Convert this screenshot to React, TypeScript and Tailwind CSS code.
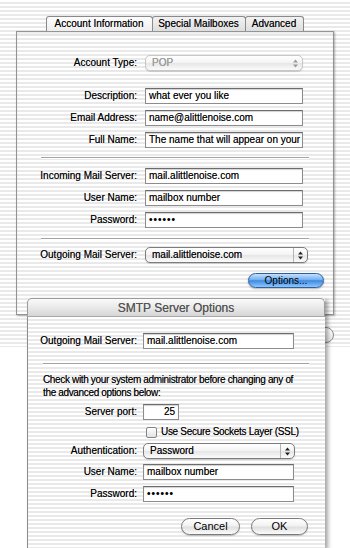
import type { ReactNode } from 'react';

// ── Shared bits ────────────────────────────────────────────────────────────

const STRIPES =
  'bg-[repeating-linear-gradient(to_bottom,#ffffff_0px,#ffffff_2px,#e9e9e9_2px,#e9e9e9_4px)]';

function TextField({ value, className = '' }: { value: string; className?: string }) {
  return (
    <div
      className={`h-[16px] shrink-0 overflow-hidden whitespace-nowrap border border-[#8c8c8c] border-t-[#6c6c6c] bg-white px-[3px] text-[10px] leading-[14px] shadow-[inset_0_1px_1px_rgba(0,0,0,0.18)] ${className}`}
    >
      {value}
    </div>
  );
}

function Arrows({ color }: { color: string }) {
  return (
    <svg width="5" height="9" viewBox="0 0 5 9">
      <path d="M2.5 0.5L5 3.5H0z M0 5.5h5L2.5 8.5z" fill={color} />
    </svg>
  );
}

function Popup({
  value,
  disabled = false,
  className = '',
}: {
  value: string;
  disabled?: boolean;
  className?: string;
}) {
  return (
    <div
      className={`flex h-[16px] shrink-0 items-stretch overflow-hidden rounded-[5px] border bg-[linear-gradient(to_bottom,#ffffff,#f3f3f3_50%,#e6e6e6_52%,#fbfbfb)] shadow-[0_1px_1px_rgba(0,0,0,0.15)] ${
        disabled ? 'border-[#c6c6c6] text-[#a3a3a3]' : 'border-[#7c7c7c] text-black'
      } ${className}`}
    >
      <span className="flex-1 pl-[6px] text-[10px] leading-[14px]">{value}</span>
      <span
        className={`flex w-[14px] items-center justify-center border-l ${
          disabled ? 'border-transparent' : 'border-[#b4b4b4]'
        }`}
      >
        <Arrows color={disabled ? '#9a9a9a' : '#222222'} />
      </span>
    </div>
  );
}

function Separator({ className = '' }: { className?: string }) {
  return <div className={`h-[2px] border-t border-[#a4a4a4] border-b border-b-white ${className}`} />;
}

function Row({
  label,
  labelWidth,
  gap,
  children,
  className = '',
}: {
  label: string;
  labelWidth: string;
  gap: string;
  children: ReactNode;
  className?: string;
}) {
  return (
    <div className={`flex items-center ${gap} ${className}`}>
      <span className={`${labelWidth} shrink-0 text-right text-[10px] leading-[14px]`}>{label}</span>
      {children}
    </div>
  );
}

// ── Tabs + panel ───────────────────────────────────────────────────────────

const TABS = [
  { label: 'Account Information', width: 'w-[107px]', active: true },
  { label: 'Special Mailboxes', width: 'w-[94px]', active: false },
  { label: 'Advanced', width: 'w-[59px]', active: false },
];

function AccountPanel() {
  const lw = 'w-[120px]';
  const gap = 'gap-[8px]';
  return (
    <div className="w-[318px]">
      <div className="flex h-[15px] justify-center">
        {TABS.map((t) => (
          <div
            key={t.label}
            className={`${t.width} -ml-px flex items-center justify-center rounded-t-[3px] border border-b-0 border-[#8a8a8a] text-[10px] leading-none ${
              t.active
                ? 'bg-[linear-gradient(to_bottom,#fdfdfd,#eeeeee)]'
                : 'bg-[linear-gradient(to_bottom,#f2f2f2,#dedede)]'
            }`}
          >
            {t.label}
          </div>
        ))}
      </div>
      <div
        className={`h-[284px] border border-[#949494] ${STRIPES} shadow-[1px_1px_2px_rgba(0,0,0,0.3),inset_0_2px_2px_rgba(0,0,0,0.08)] pr-[9px]`}
      >
        <Row label="Account Type:" labelWidth={lw} gap={gap} className="mt-[23px]">
          <Popup value="POP" disabled className="w-[158px]" />
        </Row>
        <div className="mt-[17px] flex flex-col gap-[6px]">
          <Row label="Description:" labelWidth={lw} gap={gap}>
            <TextField value="what ever you like" className="w-[158px]" />
          </Row>
          <Row label="Email Address:" labelWidth={lw} gap={gap}>
            <TextField value="name@alittlenoise.com" className="w-[158px]" />
          </Row>
          <Row label="Full Name:" labelWidth={lw} gap={gap}>
            <TextField value="The name that will appear on your" className="w-[158px]" />
          </Row>
        </div>
        <Separator className="ml-[24px] mt-[9px] w-[268px]" />
        <div className="mt-[9px] flex flex-col gap-[6px]">
          <Row label="Incoming Mail Server:" labelWidth={lw} gap={gap}>
            <TextField value="mail.alittlenoise.com" className="w-[158px]" />
          </Row>
          <Row label="User Name:" labelWidth={lw} gap={gap}>
            <TextField value="mailbox number" className="w-[158px]" />
          </Row>
          <Row label="Password:" labelWidth={lw} gap={gap}>
            <TextField value="••••••" className="w-[158px] tracking-[1px]" />
          </Row>
        </div>
        <Separator className="ml-[24px] mt-[10px] w-[268px]" />
        <Row label="Outgoing Mail Server:" labelWidth={lw} gap={gap} className="mt-[7px]">
          <Popup value="mail.alittlenoise.com" className="w-[163px]" />
        </Row>
        <div className="mt-[10px] flex justify-end">
          <button className="flex h-[15px] w-[76px] items-center justify-center rounded-full border border-[#2f5f9f] bg-[linear-gradient(to_bottom,#c4e0fc,#79b2f1_42%,#3f8ae4_52%,#8ec8fb)] text-[10px] leading-none text-black shadow-[0_1px_2px_rgba(0,0,0,0.3)]">
            Options...
          </button>
        </div>
      </div>
    </div>
  );
}

// ── SMTP sheet ─────────────────────────────────────────────────────────────

function SmtpSheet() {
  const lw = 'w-[109px]';
  const gap = 'gap-[6px]';
  return (
    <div className="relative z-10 ml-[27px] -mt-[49px] h-[250px] w-[298px] shadow-[3px_2px_4px_rgba(0,0,0,0.35)]">
      <div className="flex h-[19px] items-center justify-center rounded-t-[5px] border border-b border-[#9c9c9c] border-b-[#a8a8a8] bg-[linear-gradient(to_bottom,#fafafa,#e9e9e9_50%,#d6d6d6)] text-[12px] leading-none text-[#555555]">
        SMTP Server Options
      </div>
      <div className={`h-[231px] border-l border-[#8c8c8c] ${STRIPES} pr-[10px]`}>
        <Row label="Outgoing Mail Server:" labelWidth={lw} gap={gap} className="pt-[16px]">
          <TextField value="mail.alittlenoise.com" className="w-[151px]" />
        </Row>
        <Separator className="ml-[15px] mt-[14px] w-[266px]" />
        <p className="ml-[15px] mt-[8px] text-[10px] leading-[13px] tracking-[-0.35px]">
          Check with your system administrator before changing any of
          <br />
          the advanced options below:
        </p>
        <Row label="Server port:" labelWidth={lw} gap={gap} className="mt-[5px]">
          <TextField value="25" className="h-[15px] w-[36px] text-right leading-[13px]" />
        </Row>
        <div className="ml-[118px] mt-[6px] flex h-[12px] items-center gap-[4px]">
          <span className="h-[11px] w-[11px] rounded-[2px] border border-[#858585] bg-[linear-gradient(to_bottom,#ffffff,#e2e2e2)]" />
          <span className="text-[10px] leading-none tracking-[-0.3px]">Use Secure Sockets Layer (SSL)</span>
        </div>
        <Row label="Authentication:" labelWidth={lw} gap={gap} className="mt-[5px]">
          <Popup value="Password" className="w-[152px]" />
        </Row>
        <div className="mt-[5px] flex flex-col gap-[6px]">
          <Row label="User Name:" labelWidth={lw} gap={gap}>
            <TextField value="mailbox number" className="w-[151px]" />
          </Row>
          <Row label="Password:" labelWidth={lw} gap={gap}>
            <TextField value="••••••" className="w-[151px] tracking-[1px]" />
          </Row>
        </div>
        <div className="mt-[16px] flex justify-end gap-[11px] pr-[7px]">
          <button className="flex h-[17px] w-[59px] items-center justify-center rounded-full border border-[#7a7a7a] bg-[linear-gradient(to_bottom,#ffffff,#f1f1f1_48%,#dedede_52%,#fbfbfb)] text-[11px] leading-none shadow-[0_1px_1px_rgba(0,0,0,0.2)]">
            Cancel
          </button>
          <button className="flex h-[17px] w-[57px] items-center justify-center rounded-full border border-[#7a7a7a] bg-[linear-gradient(to_bottom,#ffffff,#f1f1f1_48%,#dedede_52%,#fbfbfb)] text-[11px] leading-none shadow-[0_1px_1px_rgba(0,0,0,0.2)]">
            OK
          </button>
        </div>
      </div>
    </div>
  );
}

// ── Page ───────────────────────────────────────────────────────────────────

export default function App() {
  return (
    <div className="h-[548px] w-[350px] overflow-hidden bg-white font-['Liberation_Sans',Arial,sans-serif] text-black [text-shadow:0_0_0.35px_rgba(0,0,0,0.55)]">
      <div className={`h-[347px] ${STRIPES} pl-[16px] pt-[16px]`}>
        <AccountPanel />
        <div className="ml-[290px] mt-[12px] h-[16px] w-[28px] rounded-full border border-[#8a8a8a] bg-[linear-gradient(to_bottom,#ffffff,#e4e4e4)]" />
      </div>
      <SmtpSheet />
    </div>
  );
}
